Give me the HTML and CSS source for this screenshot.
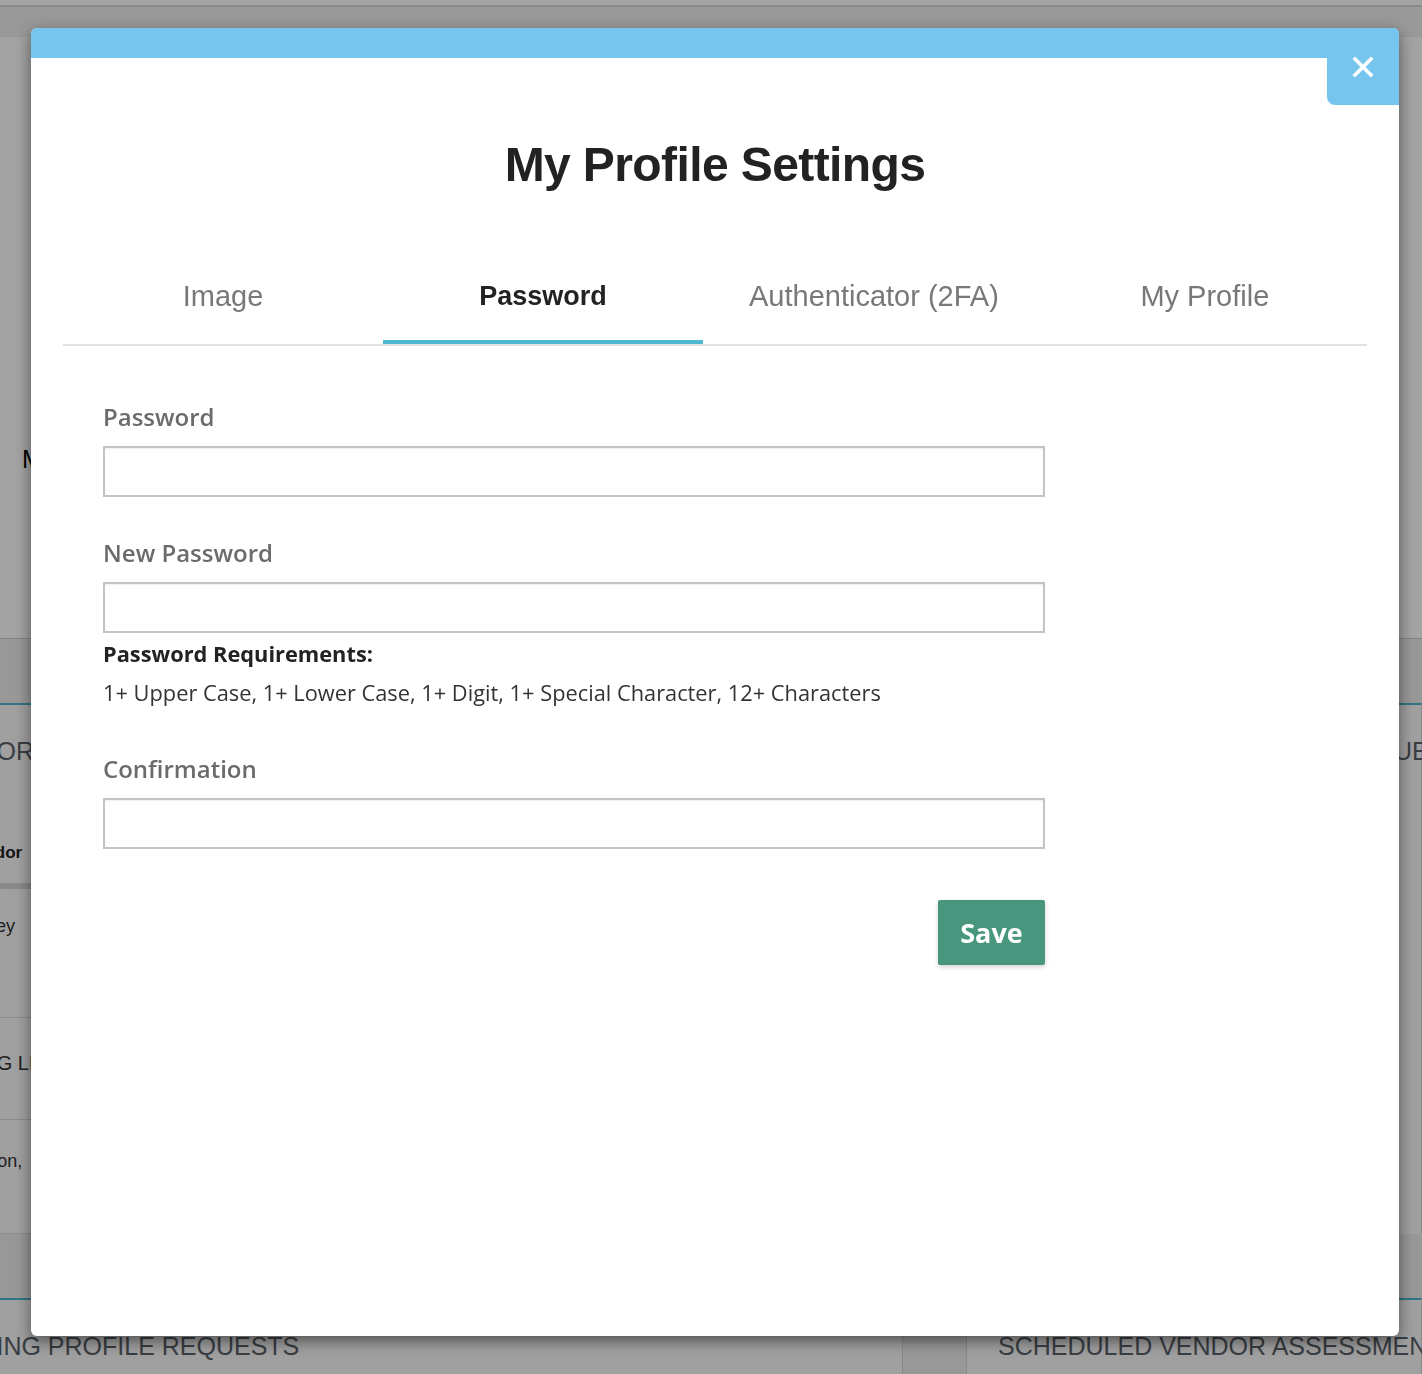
FILE: index.html
```html
<!DOCTYPE html>
<html lang="en">
<head>
<meta charset="utf-8">
<title>My Profile Settings</title>
<link rel="stylesheet" href="styles.css">
</head>
<body>
<div class="page">
  <div class="topbar"></div>
  <div class="subbar"></div>
  <section class="hero"><p class="hero-text">Market Overview</p></section>
  <div class="grid">
    <section class="panel panel-left">
      <h2 class="panel-title">VENDORS BY CATEGORY</h2>
      <div class="thead"><span class="th">Top Vendor</span></div>
      <div class="trow row-a"><span class="td">Q1 Survey</span></div>
      <div class="trow row-b"><span class="td caps">RAISING LLC</span></div>
      <div class="trow row-c"><span class="td">Warrington,</span></div>
    </section>
    <section class="panel">
      <h2 class="panel-title">VENDOR ASSESSMENTS OVERDUE</h2>
      <div class="thead"><span class="th">Vendor</span></div>
      <div class="trow row-d"><span class="td">Acme</span></div>
    </section>
    <section class="panel panel-left">
      <h2 class="panel-title">PENDING PROFILE REQUESTS</h2>
    </section>
    <section class="panel">
      <h2 class="panel-title">SCHEDULED VENDOR ASSESSMENTS</h2>
    </section>
  </div>
</div>

<div class="backdrop"></div>

<div class="modal" role="dialog" aria-labelledby="modal-title">
  <div class="modal-band"></div>
  <button class="modal-close" type="button" aria-label="Close">
    <svg width="22" height="22" viewBox="0 0 22 22" aria-hidden="true">
      <path d="M3 3 L19 19 M19 3 L3 19" stroke="#ffffff" stroke-width="3.6" stroke-linecap="square" fill="none"/>
    </svg>
  </button>
  <div class="modal-body">
    <h1 class="title" id="modal-title">My Profile Settings</h1>
    <nav class="tabs">
      <div class="tab">Image</div>
      <div class="tab tab-active">Password</div>
      <div class="tab">Authenticator (2FA)</div>
      <div class="tab">My Profile</div>
    </nav>
    <form class="form">
      <div class="field">
        <label class="field-label" for="pw">Password</label>
        <input class="field-input" id="pw" type="password">
      </div>
      <div class="field field-next">
        <label class="field-label" for="npw">New Password</label>
        <input class="field-input" id="npw" type="password">
        <p class="req-title">Password Requirements:</p>
        <p class="req-text">1+ Upper Case, 1+ Lower Case, 1+ Digit, 1+ Special Character, 12+ Characters</p>
      </div>
      <div class="field field-confirm">
        <label class="field-label" for="cpw">Confirmation</label>
        <input class="field-input" id="cpw" type="password">
      </div>
      <div class="actions">
        <button class="save" type="button">Save</button>
      </div>
    </form>
  </div>
</div>
</body>
</html>
```
FILE: styles.css
```css
* { box-sizing: border-box; }
html, body { margin: 0; height: 100%; }
body {
  font-family: "Liberation Sans", Arial, sans-serif;
  background: #eeeeee;
  overflow: hidden;
  position: relative;
}

/* underlying dashboard */
.page { margin-left: -102px; width: 1524px; }
.topbar { height: 7px; background: #ffffff; border-bottom: 2px solid #d6d6d6; }
.subbar { height: 30px; background: #f0f0f0; }
.hero {
  height: 602px;
  background: #ffffff;
  border-bottom: 1px solid #cfcfcf;
  padding: 407px 0 0 124px;
}
.hero-text { margin: 0; font-size: 25px; line-height: 30px; color: #000; }
.grid {
  display: grid;
  grid-template-columns: 1005px 456px;
  column-gap: 63px;
  row-gap: 64px;
  margin-top: 64px;
}
.panel {
  background: #fbfbfb;
  border-top: 2px solid #4db8d0;
  border-left: 1px solid #d8d8d8;
  border-right: 1px solid #d8d8d8;
  padding: 0 31px;
  min-height: 120px;
}
.panel-title {
  margin: 0;
  padding-top: 31px;
  font-size: 25px;
  line-height: 30px;
  font-weight: 400;
  color: #5a6169;
  white-space: nowrap;
}
.panel-left .panel-title { margin-left: -3px; }
.thead {
  height: 123px;
  padding-top: 75px;
  border-bottom: 6px solid #d6d6d6;
}
.th { font-weight: 700; font-size: 17px; line-height: 24px; color: #222; }
.trow { border-bottom: 1px solid #d9d9d9; }
.td { font-size: 18px; line-height: 24px; color: #333; white-space: nowrap; }
.caps { font-size: 20px; }
.row-a { height: 129px; padding-top: 25px; }
.row-b { height: 102px; padding-top: 33px; }
.row-c { height: 114px; padding-top: 29px; }
.row-d { height: 77px; padding-top: 25px; }

.backdrop {
  position: fixed;
  inset: 0;
  background: rgba(0, 0, 0, 0.36);
}

/* modal */
.modal {
  position: absolute;
  top: 28px;
  left: 31px;
  width: 1368px;
  height: 1308px;
  background: #ffffff;
  border-radius: 6px;
  overflow: hidden;
  box-shadow: 0 5px 15px rgba(0, 0, 0, 0.5);
}
.modal-band { height: 30px; background: #76c5ef; }
.modal-close {
  position: absolute;
  top: 0;
  right: 0;
  width: 72px;
  height: 77px;
  padding: 0;
  border: 0;
  background: #76c5ef;
  border-bottom-left-radius: 8px;
  display: flex;
  align-items: center;
  justify-content: center;
  cursor: pointer;
}
.modal-body { padding: 0 32px; }
.title {
  margin: 78px 0 0;
  text-align: center;
  font-size: 48px;
  line-height: 57.6px;
  font-weight: 700;
  color: #222222;
  letter-spacing: -0.6px;
}
.tabs {
  display: flex;
  margin-top: 52px;
  border-bottom: 2px solid #e2e2e2;
}
.tab {
  min-width: 320px;
  padding: 34px 46px 27px;
  border-bottom: 4px solid transparent;
  font-size: 29px;
  line-height: 33.6px;
  color: #787878;
  text-align: center;
  white-space: nowrap;
}
.tab-active {
  color: #222222;
  font-size: 27px;
  font-weight: 700;
  border-bottom-color: #4fb8d2;
}

.form { width: 942px; margin: 55px 0 0 40px; font-family: "Open Sans", sans-serif; }
.field-next { margin-top: 40px; }
.field-confirm { margin-top: 46px; }
.field-label {
  display: block;
  font-weight: 600;
  font-size: 24px;
  line-height: 32px;
  color: #6b6b6b;
  margin-bottom: 13px;
}
.field-input {
  display: block;
  width: 100%;
  height: 51px;
  margin: 0;
  border: 2px solid #c4c4c4;
  border-radius: 0;
  background: #ffffff;
  box-shadow: inset 0 1px 2px rgba(0, 0, 0, 0.07);
  font: inherit;
}
.req-title {
  margin: 7px 0 0;
  font-weight: 700;
  font-size: 21.8px;
  line-height: 28px;
  color: #222222;
}
.req-text {
  margin: 11px 0 0;
  font-size: 21.8px;
  line-height: 28px;
  color: #333333;
}
.actions { display: flex; justify-content: flex-end; margin-top: 51px; }
.save {
  width: 107px;
  height: 65px;
  border: 0;
  border-radius: 2px;
  background: #47967d;
  color: #ffffff;
  font-family: "Open Sans", sans-serif;
  font-weight: 700;
  font-size: 27px;
  box-shadow: 0 2px 5px rgba(0, 0, 0, 0.18);
  cursor: pointer;
}
```
